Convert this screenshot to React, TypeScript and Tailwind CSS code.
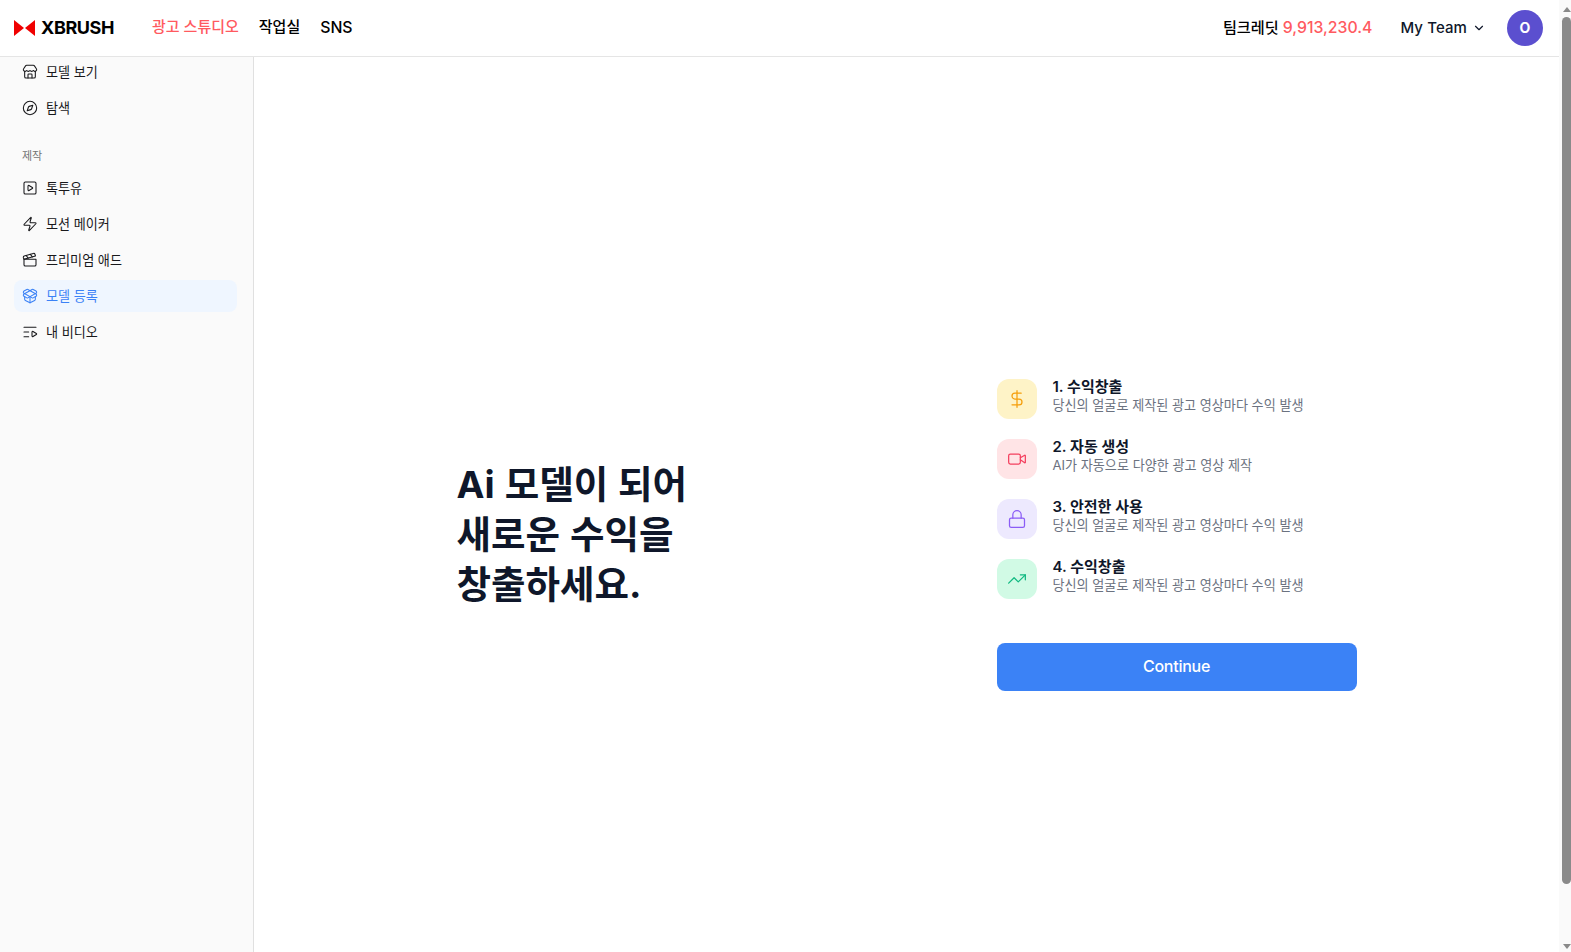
import React from "react";
import { Store, Compass, SquarePlay, Zap, Clapperboard, PackageOpen, ListVideo, DollarSign, Video, Lock, TrendingUp, ChevronDown } from "lucide-react";

const font = "font-['Inter','Noto_Sans_CJK_KR',sans-serif]";

function NavItem({ icon: Icon, label, active }: { icon: any; label: string; active?: boolean }) {
  return (
    <div className={`flex items-center gap-2 h-8 px-2 rounded-lg text-[13.1px] ${active ? "bg-[#eff6ff] text-[#3b82f6]" : "text-[#18181b]"}`}>
      <Icon size={16} strokeWidth={1.6} />
      <span className="pt-px">{label}</span>
    </div>
  );
}

const steps = [
  { icon: DollarSign, bg: "bg-[#fef3c7]", color: "text-[#f59e0b]", title: "1. 수익창출", desc: "당신의 얼굴로 제작된 광고 영상마다 수익 발생" },
  { icon: Video, bg: "bg-[#ffe4e6]", color: "text-[#f43f5e]", title: "2. 자동 생성", desc: "AI가 자동으로 다양한 광고 영상 제작" },
  { icon: Lock, bg: "bg-[#ede9fe]", color: "text-[#8b5cf6]", title: "3. 안전한 사용", desc: "당신의 얼굴로 제작된 광고 영상마다 수익 발생" },
  { icon: TrendingUp, bg: "bg-[#d1fae5]", color: "text-[#10b981]", title: "4. 수익창출", desc: "당신의 얼굴로 제작된 광고 영상마다 수익 발생" },
];

export default function App() {
  return (
    <div className={`${font} h-screen overflow-hidden flex bg-white text-[#0f172a]`}>
      <div className="flex-1 min-w-0 flex flex-col">
        <header className="h-[57px] shrink-0 border-b border-[#e5e5e5] flex items-center pl-[14px] pr-[16px] pb-px bg-white">
          <div className="flex items-center gap-[6px] w-[138px]">
            <svg width="21" height="16" viewBox="0 0 21 16"><path d="M0 0L10 8L0 16Z M21 0L11 8L21 16Z" fill="#f00000" /></svg>
            <span className="text-[18px] font-bold text-black tracking-[-0.4px]">XBRUSH</span>
          </div>
          <nav className="flex items-center gap-5 text-[15px] font-medium text-black">
            <span className="text-[#ff5a5f]">광고 스튜디오</span>
            <span>작업실</span>
            <span className="text-[15.8px]">SNS</span>
          </nav>
          <div className="ml-auto flex items-center">
            <span className="text-[15.2px] font-medium text-black">팀크레딧 <span className="text-[15.8px] text-[#ff5a5f]">9,913,230.4</span></span>
            <span className="ml-7 mt-px text-[15px] tracking-[0.1px] font-medium text-[#0f172a]">My Team</span>
            <ChevronDown size={14} className="ml-[5px] mt-px" />
            <div className="ml-[21px] w-9 h-9 rounded-full bg-[#5b4fcf] text-white text-[14px] font-bold flex items-center justify-center">O</div>
          </div>
        </header>
        <div className="flex-1 min-h-0 flex">
          <aside className="w-[254px] shrink-0 bg-[#fafafa] border-r border-[#e0e0e0] px-[14px]">
            <div className="flex flex-col gap-1 -mt-px">
              <NavItem icon={Store} label="모델 보기" />
              <NavItem icon={Compass} label="탐색" />
            </div>
            <div className="mt-[24px] mb-[8px] px-2 text-[11px] h-4 leading-4 text-[#737373]">제작</div>
            <div className="flex flex-col gap-1 w-[223px]">
              <NavItem icon={SquarePlay} label="톡투유" />
              <NavItem icon={Zap} label="모션 메이커" />
              <NavItem icon={Clapperboard} label="프리미엄 애드" />
              <NavItem icon={PackageOpen} label="모델 등록" active />
              <NavItem icon={ListVideo} label="내 비디오" />
            </div>
          </aside>
          <main className="flex-1 flex items-center justify-center pt-[61px]">
            <div className="w-[900px] flex items-center justify-between">
              <h1 className="text-[37.5px] leading-[50px] font-bold text-[#0f172a] [word-spacing:1px]">Ai 모델이 되어<br />새로운 수익을<br />창출하세요.</h1>
              <div className="w-[360px]">
                <div className="flex flex-col gap-5">
                  {steps.map((s) => (
                    <div key={s.title} className="flex items-start gap-4">
                      <div className={`w-10 h-10 rounded-xl flex items-center justify-center ${s.bg} ${s.color}`}>
                        <s.icon size={20} strokeWidth={1.5} />
                      </div>
                      <div>
                        <div className="text-[15px] leading-[15px] font-semibold text-[#0f172a]">{s.title}</div>
                        <div className="text-[13.1px] leading-[23px] text-[#6b7280]">{s.desc}</div>
                      </div>
                    </div>
                  ))}
                </div>
                <button className="mt-[44px] w-full h-12 pb-[3px] rounded-lg bg-[#3b82f6] text-white text-[16px] tracking-[-0.25px] font-medium">Continue</button>
              </div>
            </div>
          </main>
        </div>
      </div>
      <div className="w-3 shrink-0 bg-[#fafafa] flex flex-col items-end">
        <div className="w-[9px] h-[17px] flex items-start justify-center pt-[7px]">
          <div className="w-0 h-0 border-x-[4.5px] border-x-transparent border-b-[5px] border-b-[#8a8a8a]" />
        </div>
        <div className="w-[9px] h-[867px] rounded-[5px] bg-[#8a8a8a]" />
        <div className="mt-auto w-[9px] h-[8px] flex items-start justify-center">
          <div className="w-0 h-0 border-x-[4.5px] border-x-transparent border-t-[5px] border-t-[#8a8a8a]" />
        </div>
      </div>
    </div>
  );
}
